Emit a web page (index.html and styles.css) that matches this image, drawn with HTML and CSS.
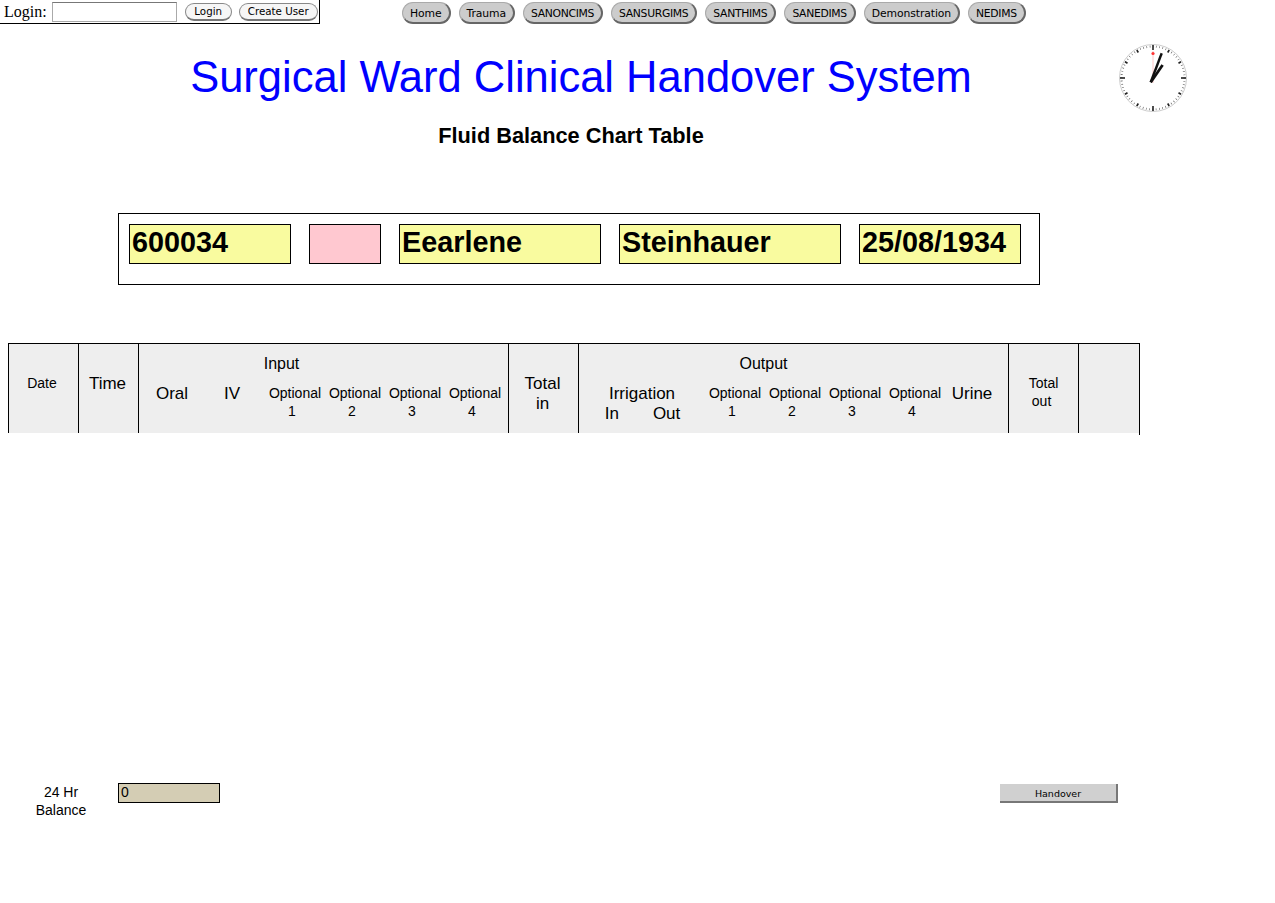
FILE: index.html
```html
<!DOCTYPE html>
<html lang="en">
<head>
    <meta charset="UTF-8">
    <meta name="viewport" content="width=device-width, initial-scale=1.0">
    <title>Fluid Balance Chart Table</title>
    <link rel="stylesheet" href="styles.css">
</head>
<body>
    <div class="topbar">
        <form class="login-box">
            <label for="login">Login:</label>
            <input type="text" id="login" class="login-input">
            <button type="button" class="login-button">Login</button>
            <button type="button" class="login-button create-user">Create User</button>
        </form>
        <nav class="nav">
            <a class="nav-button">Home</a>
            <a class="nav-button">Trauma</a>
            <a class="nav-button caps">SANONCIMS</a>
            <a class="nav-button caps">SANSURGIMS</a>
            <a class="nav-button caps">SANTHIMS</a>
            <a class="nav-button caps">SANEDIMS</a>
            <a class="nav-button">Demonstration</a>
            <a class="nav-button caps">NEDIMS</a>
        </nav>
    </div>

    <svg class="clock" width="68" height="68" viewBox="0 0 68 68">
        <circle cx="34" cy="34" r="33.5" fill="#fff" stroke="#ccc" stroke-width="1"/>
        <circle cx="34" cy="34" r="31.5" fill="none" stroke="#555" stroke-width="2" stroke-dasharray="0.6 2.699" stroke-dashoffset="0.3" transform="rotate(-90 34 34)"/>
        <g stroke="#222" stroke-width="1.6">
            <line x1="34" y1="1" x2="34" y2="6"/>
            <line x1="34" y1="62" x2="34" y2="67"/>
            <line x1="1" y1="34" x2="6" y2="34"/>
            <line x1="62" y1="34" x2="67" y2="34"/>
            <line x1="50.2" y1="6" x2="48.7" y2="8.5"/>
            <line x1="62" y1="17.8" x2="59.5" y2="19.3"/>
            <line x1="62" y1="50.2" x2="59.5" y2="48.7"/>
            <line x1="50.2" y1="62" x2="48.7" y2="59.5"/>
            <line x1="17.8" y1="62" x2="19.3" y2="59.5"/>
            <line x1="6" y1="50.2" x2="8.5" y2="48.7"/>
            <line x1="6" y1="17.8" x2="8.5" y2="19.3"/>
            <line x1="17.8" y1="6" x2="19.3" y2="8.5"/>
        </g>
        <line x1="34" y1="39" x2="34" y2="7" stroke="#ffc8c8" stroke-width="1"/>
        <circle cx="34" cy="9.5" r="1.6" fill="#f33"/>
        <line x1="31.7" y1="38.3" x2="43.6" y2="21" stroke="#111" stroke-width="2.8"/>
        <line x1="31.7" y1="38.3" x2="42.7" y2="9.3" stroke="#111" stroke-width="2.4"/>
    </svg>

    <h1 class="title">Surgical Ward Clinical Handover System</h1>
    <h2 class="subtitle">Fluid Balance Chart Table</h2>

    <div class="patient">
        <div class="field field-id">600034</div>
        <div class="field field-alert"></div>
        <div class="field field-first">Eearlene</div>
        <div class="field field-last">Steinhauer</div>
        <div class="field field-dob">25/08/1934</div>
    </div>

    <div class="chart-head">
        <div class="cell cell-top date">Date</div>
        <div class="cell cell-top big nudge">Time</div>
        <div class="cell">
            <div class="group-label input-label">Input</div>
            <div class="sub-row">
                <div class="sub big">Oral</div>
                <div class="sub big">IV</div>
                <div class="sub opt"><span>Optional</span><br>1</div>
                <div class="sub opt"><span>Optional</span><br>2</div>
                <div class="sub opt"><span>Optional</span><br>3</div>
                <div class="sub opt"><span>Optional</span><br>4</div>
            </div>
        </div>
        <div class="cell cell-top big nudge">Total<br>in</div>
        <div class="cell">
            <div class="group-label output-label">Output</div>
            <div class="sub-row">
                <div class="sub-wide big">
                    Irrigation
                    <div class="irrigation">
                        <span>In</span>
                        <span>Out</span>
                    </div>
                </div>
                <div class="sub opt"><span>Optional</span><br>1</div>
                <div class="sub opt"><span>Optional</span><br>2</div>
                <div class="sub opt"><span>Optional</span><br>3</div>
                <div class="sub opt"><span>Optional</span><br>4</div>
                <div class="sub big">Urine</div>
            </div>
        </div>
        <div class="cell cell-top total-out">Total<br>out&nbsp;</div>
        <div class="cell cell-last"></div>
    </div>

    <div class="balance">
        <div class="balance-label">24 Hr<br>Balance</div>
        <div class="balance-value">0</div>
        <button type="button" class="handover">Handover</button>
    </div>
</body>
</html>
```

FILE: styles.css
```css
body {
    margin: 0;
    font-family: "Liberation Sans", Arial, sans-serif;
    background-color: #fff;
    color: #000;
}
.topbar {
    display: flex;
    align-items: flex-start;
}
.login-box {
    display: flex;
    align-items: center;
    box-sizing: border-box;
    width: 320px;
    height: 24px;
    padding-left: 4px;
    border-right: 1px solid #000;
    border-bottom: 1px solid #000;
    font-family: "Liberation Serif", "Times New Roman", serif;
    font-size: 16px;
}
.login-input {
    box-sizing: border-box;
    width: 125px;
    height: 20px;
    margin: 0 8px 0 5px;
    padding: 0;
    border: 1px solid #aaa;
    border-top-color: #777;
    background-color: #fff;
}
.login-button {
    box-sizing: border-box;
    width: 47px;
    height: 18px;
    padding: 0;
    border: 1px solid #888;
    border-bottom: 2px solid #777;
    border-radius: 9px;
    background-color: #f6f6f6;
    font-family: "DejaVu Sans", Verdana, sans-serif;
    font-size: 10.3px;
    color: #000;
}
.create-user {
    width: 79px;
    margin-left: 7px;
}
.nav {
    display: flex;
    gap: 8px;
    margin: 2px 0 0 82px;
}
.nav-button {
    box-sizing: border-box;
    height: 22px;
    padding: 0 7px;
    border: 1px solid #aaa;
    border-right: 2px solid #666;
    border-bottom: 2px solid #666;
    border-radius: 11px;
    background-color: #ccc;
    font-family: "DejaVu Sans", Verdana, sans-serif;
    font-size: 10.8px;
    line-height: 21px;
    letter-spacing: -0.1px;
    color: #000;
}
.caps {
    letter-spacing: -0.32px;
}
.clock {
    position: absolute;
    left: 1119px;
    top: 44px;
}
.title {
    width: 1162px;
    margin: 25px 0 0;
    font-size: 43.5px;
    font-weight: normal;
    line-height: 56px;
    text-align: center;
    color: #00f;
}
.subtitle {
    width: 1142px;
    margin: 18px 0 0;
    font-size: 21.75px;
    line-height: 26px;
    text-align: center;
}
.patient {
    display: flex;
    gap: 18px;
    box-sizing: border-box;
    width: 922px;
    height: 72px;
    margin: 64px 0 0 118px;
    padding: 10px;
    border: 1px solid #000;
}
.field {
    box-sizing: border-box;
    height: 40px;
    padding-left: 2px;
    border: 1px solid #000;
    background-color: #f9fb9f;
    font-size: 28.8px;
    font-weight: bold;
    line-height: 34px;
}
.field-id { width: 162px; }
.field-alert { width: 72px; background-color: #ffc8d0; }
.field-first { width: 202px; }
.field-last { width: 222px; }
.field-dob { width: 162px; }
.chart-head {
    display: grid;
    grid-template-columns: 70px 60px 370px 70px 430px 70px 62px;
    box-sizing: border-box;
    width: 1132px;
    height: 90px;
    margin: 58px 0 0 8px;
    border-top: 1px solid #000;
    background-color: #eee;
    text-align: center;
}
.cell {
    position: relative;
    box-sizing: border-box;
    padding-top: 10px;
    border-left: 1px solid #000;
    font-size: 16px;
    line-height: 20px;
}
.cell-top {
    padding-top: 30px;
}
.cell-last {
    border-right: 1px solid #000;
}
.cell-last::after {
    content: "";
    position: absolute;
    right: -1px;
    top: 89px;
    width: 1px;
    height: 2px;
    background-color: #000;
}
.date {
    padding-top: 29px;
    padding-right: 3px;
    font-size: 14px;
}
.big {
    font-size: 17px;
}
.nudge {
    padding-right: 2px;
}
.total-out {
    padding-top: 30px;
    font-size: 14px;
    line-height: 18px;
}
.input-label {
    padding-right: 84px;
}
.output-label {
    padding-right: 60px;
}
.sub-row {
    display: flex;
    margin: 10px 0 0 3px;
}
.sub {
    width: 60px;
    flex: none;
}
.sub-wide {
    width: 120px;
    flex: none;
}
.opt {
    font-size: 14px;
    line-height: 18px;
    white-space: nowrap;
}
.opt span {
    position: relative;
    left: 3px;
}
.irrigation {
    display: flex;
    justify-content: center;
    gap: 34px;
    padding-left: 1px;
}
.balance {
    display: flex;
    align-items: flex-start;
    width: 1110px;
    margin: 350px 0 0 8px;
}
.balance-label {
    width: 106px;
    margin-right: 4px;
    font-size: 14px;
    line-height: 18px;
    text-align: center;
}
.balance-value {
    box-sizing: border-box;
    width: 102px;
    height: 20px;
    padding-left: 2px;
    border: 1px solid #000;
    background-color: #d4cdb4;
    font-size: 14px;
    line-height: 17px;
}
.handover {
    box-sizing: border-box;
    width: 118px;
    height: 19px;
    margin: 1px 0 0 auto;
    padding: 1px 0 0;
    border: none;
    border-right: 2px solid #777;
    border-bottom: 2px solid #777;
    background-color: #d0d0d0;
    font-family: "DejaVu Sans", Verdana, sans-serif;
    font-size: 9.5px;
    color: #000;
}
```
